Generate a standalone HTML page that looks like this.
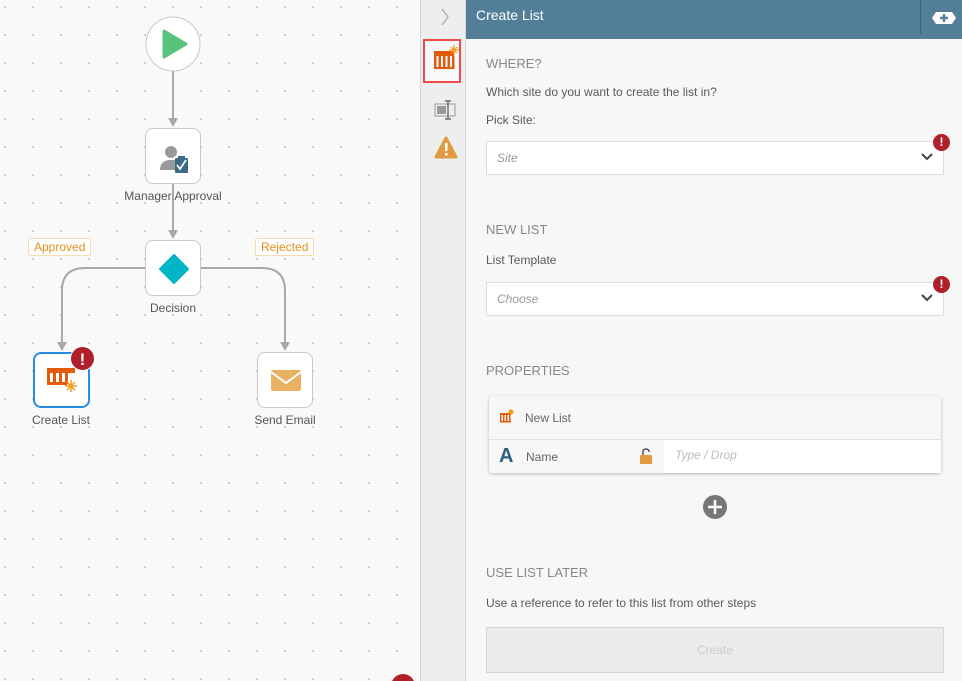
<!DOCTYPE html>
<html><head><style>
*{box-sizing:border-box;margin:0;padding:0}
html{height:681px;overflow:hidden}
body{width:962px;height:681px;overflow:hidden;font-family:"Liberation Sans",sans-serif;background:#f8f8f8;position:relative;font-size:12px;color:#555}
.canvas{position:absolute;left:0;top:0;width:420px;height:681px;overflow:hidden;background-color:#f9f9f9;background-image:radial-gradient(circle,#c8c8c8 0.8px,transparent 1.2px);background-size:28px 28px;background-position:-9px -7px}
.node{position:absolute;width:56px;height:56px;background:#fff;border:1px solid #c8c8c8;border-radius:8px}
.lbl{position:absolute;font-size:12px;color:#555;text-align:center;width:140px}
.tag{position:absolute;font-size:12px;color:#e0901a;border:1px solid #f5dcb5;background:#fff;padding:1px 5px;border-radius:2px}
.side{position:absolute;left:420px;top:0;width:46px;height:681px;background:#eeeeee;border-left:1px solid #d6d6d6;border-right:1px solid #d6d6d6}
.panel{position:absolute;left:466px;top:0;width:496px;height:681px;background:#f7f7f7}
.hdr{position:absolute;left:0;top:0;width:496px;height:39px;background:#527f97;color:#fff;font-size:14px;padding:7px 10px}
.h{position:absolute;left:20px;font-size:13px;color:#888}
.t{position:absolute;left:20px;font-size:12px;color:#5a5a5a}
.sel{position:absolute;left:20px;width:458px;height:34px;background:#fff;border:1px solid #ddd;font-style:italic;color:#999;padding:9px 10px;font-size:12px}
.err{position:absolute;width:17px;height:17px;border-radius:50%;background:#b0202a;color:#fff;font-weight:bold;font-size:12px;text-align:center;line-height:17px}
</style></head><body>
<div class="canvas">
<svg width="420" height="681" style="position:absolute;left:0;top:0">
<g stroke="#a8a8a8" stroke-width="2" fill="none">
<line x1="173" y1="71" x2="173" y2="122"/>
<line x1="173" y1="184" x2="173" y2="234"/>
<path d="M145 268 H85 Q62 268 62 291 V345"/>
<path d="M201 268 H262 Q285 268 285 291 V345"/>
</g>
<g fill="#a8a8a8">
<path d="M168 118 L178 118 L173 127Z"/><path d="M168 230 L178 230 L173 239Z"/>
<path d="M57 342 L67 342 L62 351Z"/><path d="M280 342 L290 342 L285 351Z"/>
</g>
<circle cx="173" cy="44" r="27" fill="#fff" stroke="#c8c8c8"/>
<path d="M164 31 L186 44 L164 57Z" fill="#58c47a" stroke="#58c47a" stroke-width="3" stroke-linejoin="round"/>
<circle cx="403" cy="686" r="12" fill="#b0202a"/>
</svg>
<div class="node" style="left:145px;top:128px">
<svg width="56" height="56"><circle cx="25" cy="23" r="6" fill="#999"/><path d="M14 41 Q14 31 25 31 L30 31 L30 41Z" fill="#999"/><rect x="29" y="29" width="13" height="15" rx="1" fill="#3b6a87"/><rect x="32" y="27" width="7" height="3" fill="#3b6a87"/><path d="M31 36 L34 40 L40 31" stroke="#fff" stroke-width="1.8" fill="none"/></svg></div>
<div class="lbl" style="left:103px;top:189px">Manager Approval</div>
<div class="node" style="left:145px;top:240px"><svg width="56" height="56"><path d="M28 14 L42 28 L28 42 L14 28Z" fill="#00b5c8" stroke="#00b5c8" stroke-width="2" stroke-linejoin="round"/></svg></div>
<div class="lbl" style="left:103px;top:301px">Decision</div>
<div class="tag" style="left:28px;top:238px">Approved</div>
<div class="tag" style="left:255px;top:238px">Rejected</div>
<div class="node" style="left:33px;top:352px;border:2px solid #2a8de0;width:57px;height:56px"><svg width="54" height="54"><rect x="12" y="14" width="28" height="5" fill="#e25a0c"/><g fill="#e25a0c"><rect x="12" y="19" width="3" height="11"/><rect x="18" y="19" width="3" height="11"/><rect x="24" y="19" width="3" height="11"/><rect x="30" y="19" width="3" height="11"/><rect x="12" y="28" width="20" height="3"/></g><g stroke="#f59a1a" stroke-width="1.5"><line x1="36" y1="26" x2="36" y2="38"/><line x1="30" y1="32" x2="42" y2="32"/><line x1="32" y1="28" x2="40" y2="36"/><line x1="40" y1="28" x2="32" y2="36"/></g></svg></div>
<div class="err" style="left:70px;top:346px;width:25px;height:25px;line-height:25px;font-size:17px;border:1px solid #fff">!</div>
<div class="lbl" style="left:-9px;top:413px">Create List</div>
<div class="node" style="left:257px;top:352px"><svg width="56" height="56"><rect x="13" y="17" width="30" height="21" rx="2" fill="#e9b262"/><path d="M13 19 L28 30 L43 19" stroke="#fff" stroke-width="2" fill="none"/></svg></div>
<div class="lbl" style="left:215px;top:413px">Send Email</div>
</div>
<div class="side">
<svg width="46" height="170" style="position:absolute;left:0;top:0">
<path d="M21 9 L27 17 L21 25" stroke="#aaa" stroke-width="1.3" fill="none"/>
<rect x="3" y="40" width="36" height="42" fill="#f8f8f8" stroke="#f04b4b" stroke-width="2"/>
<rect x="13" y="51" width="20" height="5" fill="#e25a0c"/>
<g fill="#e25a0c"><rect x="13" y="56" width="2.5" height="13"/><rect x="17.5" y="56" width="2.5" height="13"/><rect x="22" y="56" width="2.5" height="13"/><rect x="26.5" y="56" width="2.5" height="13"/><rect x="31" y="56" width="2.5" height="13"/><rect x="13" y="67" width="20" height="2"/></g>
<g stroke="#f59a1a" stroke-width="1.2"><line x1="33" y1="45" x2="33" y2="55"/><line x1="28" y1="50" x2="38" y2="50"/><line x1="30" y1="47" x2="36" y2="53"/><line x1="36" y1="47" x2="30" y2="53"/></g>
<rect x="14" y="104" width="20" height="12" fill="none" stroke="#999"/><rect x="16" y="106" width="9" height="8" fill="#999"/>
<path d="M27 101 V119 M24 101 H30 M24 119 H30" stroke="#555" stroke-width="1.2"/>
<path d="M25 138 L35 157 L15 157Z" fill="#e09a40" stroke="#e09a40" stroke-width="3" stroke-linejoin="round"/>
<rect x="24" y="143" width="2.5" height="8" fill="#fff"/><rect x="24" y="153" width="2.5" height="2.5" fill="#fff"/>
</svg>
</div>
<div class="panel">
<div class="hdr">Create List</div>
<div style="position:absolute;left:454px;top:0;width:1px;height:34px;background:#3e6478"></div>
<svg style="position:absolute;left:466px;top:10px" width="24" height="16"><path d="M4 2 H20 L24 8 L20 14 H4 L0 8Z" fill="#fff"/><path d="M12 4 V12 M8 8 H16" stroke="#527f97" stroke-width="2.4"/></svg>
<div class="h" style="top:56px">WHERE?</div>
<div class="t" style="top:85px">Which site do you want to create the list in?</div>
<div class="t" style="top:113px">Pick Site:</div>
<div class="sel" style="top:141px">Site</div>
<div class="sel" style="top:282px">Choose</div>
<svg style="position:absolute;left:454px;top:152px" width="14" height="10"><path d="M2 2 L7 7 L12 2" stroke="#444" stroke-width="2" fill="none"/></svg>
<svg style="position:absolute;left:454px;top:293px" width="14" height="10"><path d="M2 2 L7 7 L12 2" stroke="#444" stroke-width="2" fill="none"/></svg>
<div class="err" style="left:467px;top:134px">!</div>
<div class="err" style="left:467px;top:276px">!</div>
<div class="h" style="top:222px">NEW LIST</div>
<div class="t" style="top:253px">List Template</div>
<div class="h" style="top:363px">PROPERTIES</div>
<div style="position:absolute;left:23px;top:396px;width:452px;height:77px;background:#f7f7f7;border-radius:3px;box-shadow:0 1px 3px rgba(0,0,0,.25)">
<div style="position:absolute;left:0;top:43px;width:452px;height:1px;background:#e2e2e2"></div>
<div style="position:absolute;left:175px;top:44px;width:277px;height:33px;background:#fff"></div>
<svg style="position:absolute;left:10px;top:13px" width="16" height="16"><rect x="1" y="4" width="11" height="2" fill="#e25a0c"/><g fill="#e25a0c"><rect x="1" y="6" width="1.5" height="7"/><rect x="4" y="6" width="1.5" height="7"/><rect x="7" y="6" width="1.5" height="7"/><rect x="10" y="6" width="1.5" height="7"/><rect x="1" y="12" width="11" height="1.5"/></g><circle cx="12" cy="3" r="2.5" fill="#f59a1a"/></svg>
<div style="position:absolute;left:36px;top:15px;color:#666">New List</div>
<div style="position:absolute;left:10px;top:49px;font-size:20px;font-weight:bold;color:#2e5f80">A</div>
<div style="position:absolute;left:37px;top:54px;color:#666">Name</div>
<svg style="position:absolute;left:150px;top:52px" width="14" height="16"><path d="M4 7 V4 Q4 1 7 1 Q10 1 10 4" stroke="#555" stroke-width="1.5" fill="none"/><rect x="1" y="7" width="12" height="9" rx="1" fill="#e09a40"/></svg>
<div style="position:absolute;left:186px;top:52px;color:#bbb;font-style:italic">Type / Drop</div>
</div>
<svg style="position:absolute;left:237px;top:495px" width="24" height="24"><circle cx="12" cy="12" r="12" fill="#777"/><path d="M12 5 V19 M5 12 H19" stroke="#fff" stroke-width="2.5"/></svg>
<div class="h" style="top:565px">USE LIST LATER</div>
<div class="t" style="top:596px">Use a reference to refer to this list from other steps</div>
<div style="position:absolute;left:20px;top:627px;width:458px;height:46px;background:#ebebeb;border:1px solid #d5d5d5;text-align:center;line-height:44px;color:#ccc">Create</div>
</div>
</body></html>
